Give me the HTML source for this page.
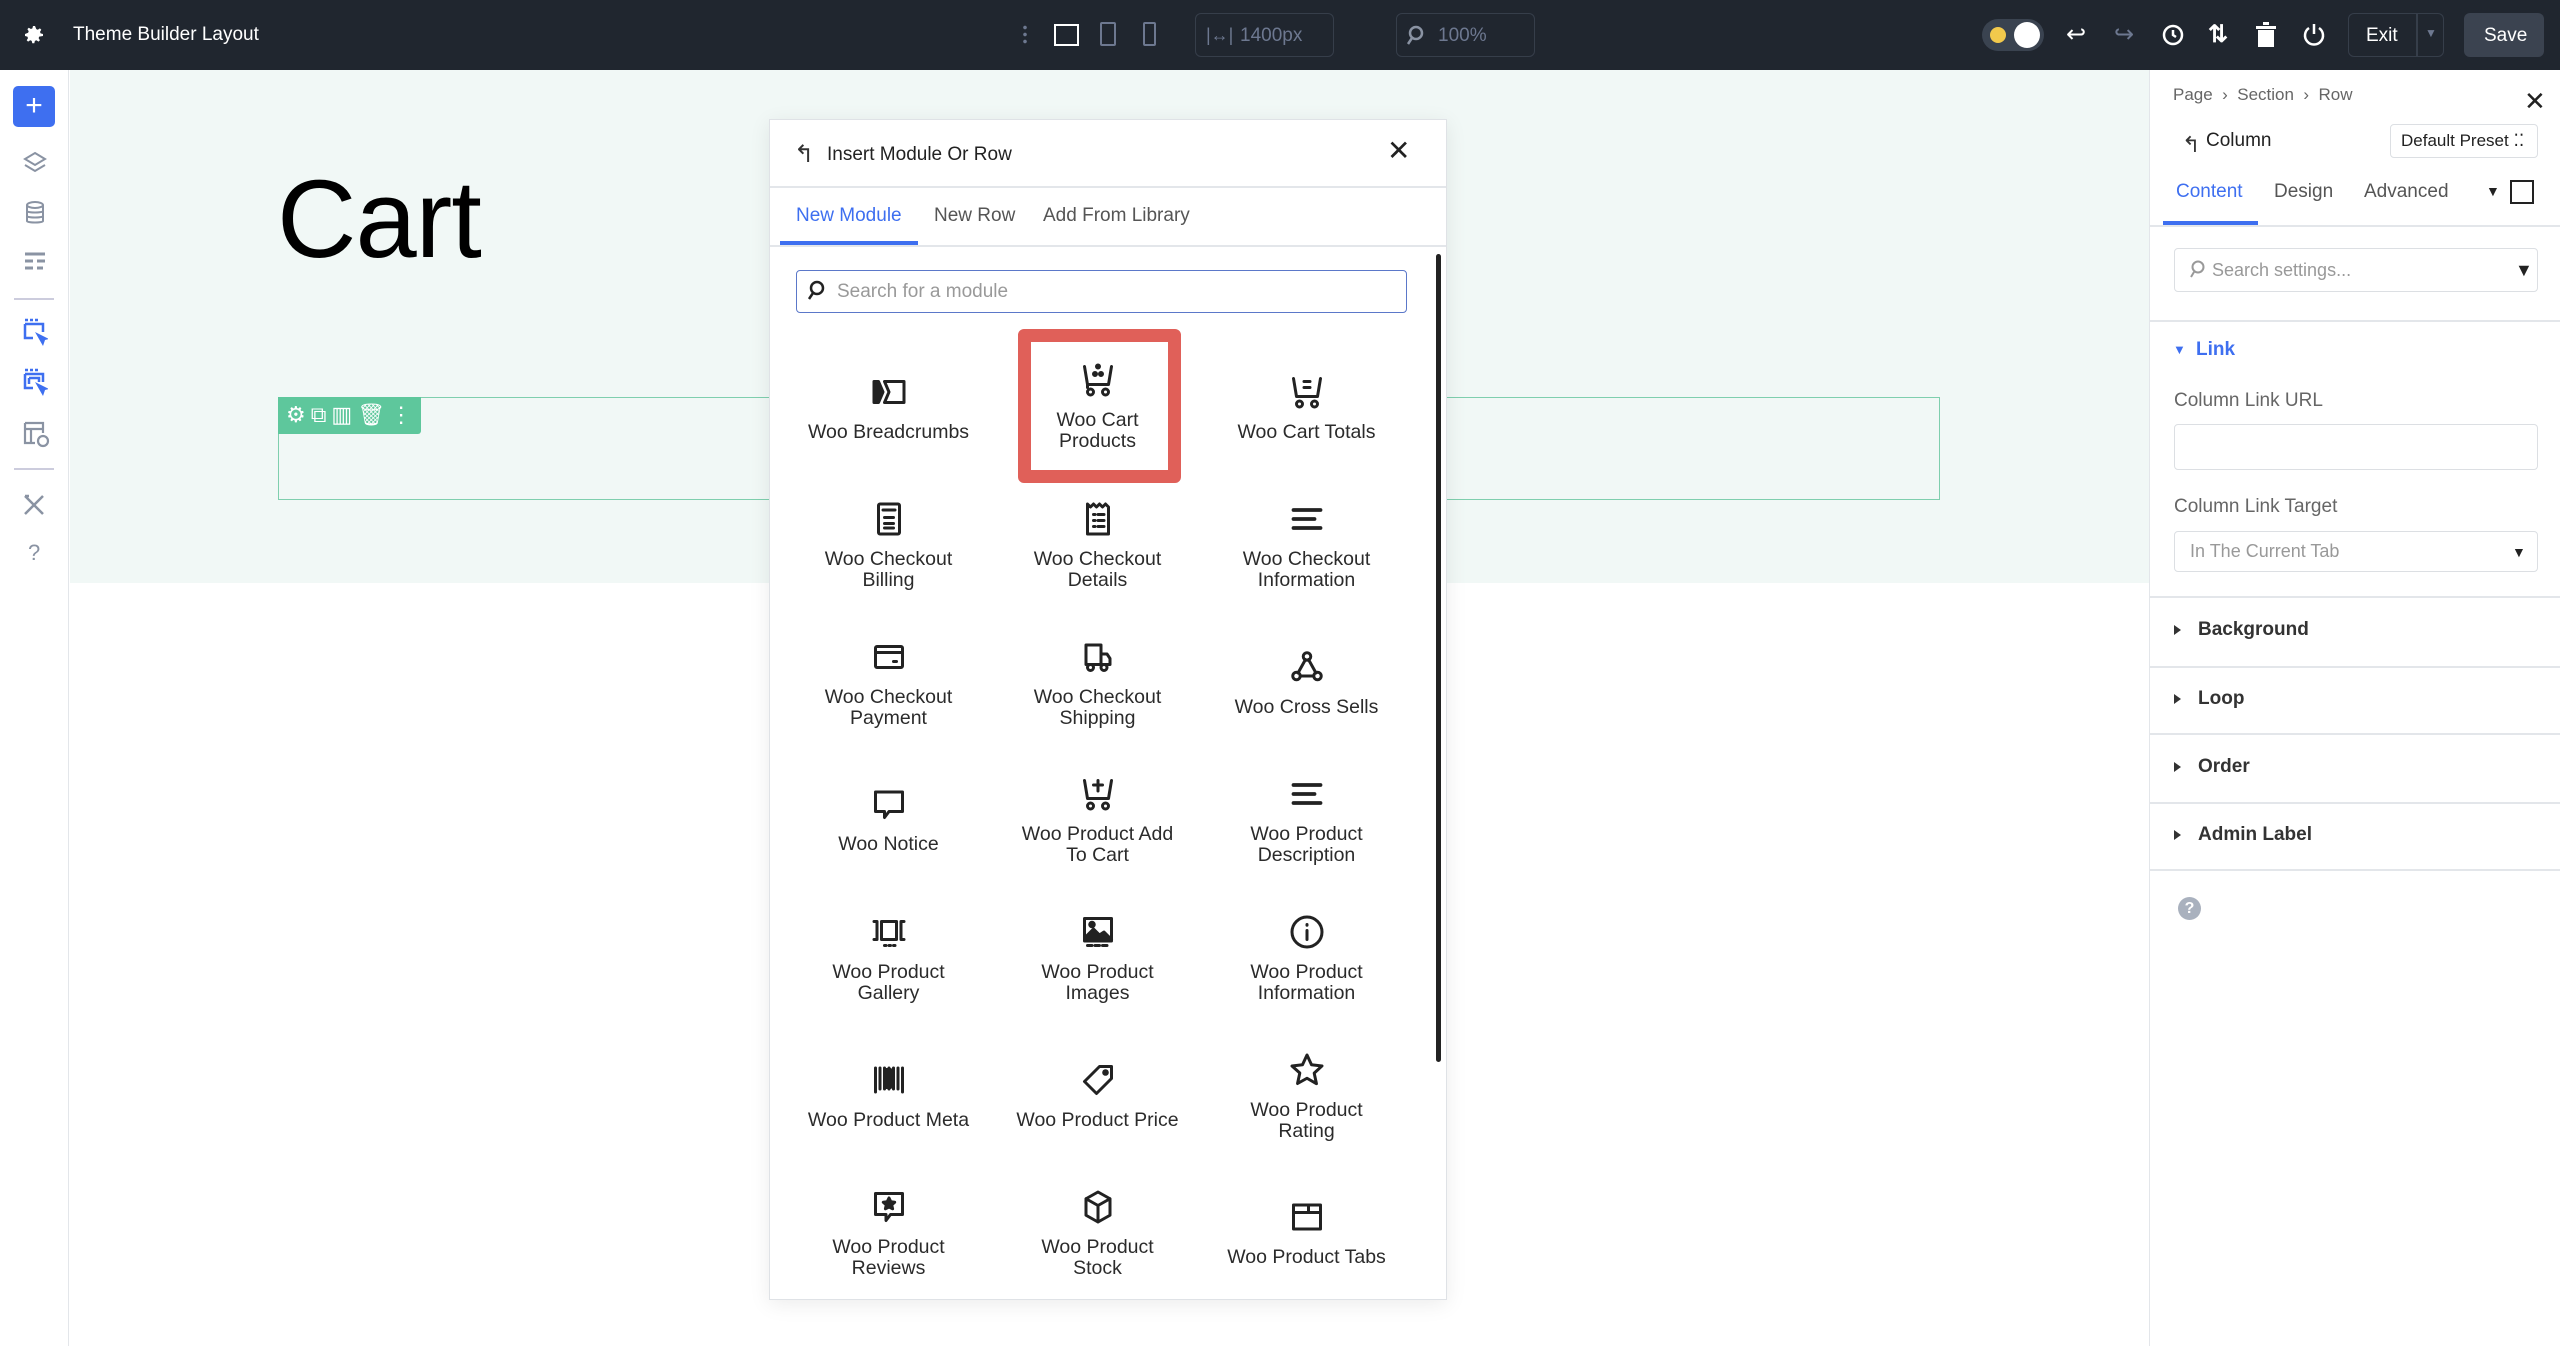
<!DOCTYPE html>
<html><head><meta charset="utf-8"><style>
*{box-sizing:border-box;margin:0;padding:0}
body{width:2560px;height:1346px;overflow:hidden;font-family:"Liberation Sans",sans-serif;background:#fff;position:relative}
.a{position:absolute}
.top{left:0;top:0;width:2560px;height:70px;background:#20262f}
.tb{color:#fff;font-size:20px}
.box{border:1.5px solid #363e4a;border-radius:6px}
.side{left:0;top:70px;width:69px;height:1276px;background:#fff;border-right:1.5px solid #e3e6ea}
.canvas{left:70px;top:70px;width:2079px;height:513px;background:#f1f8f6}
.modal{left:769px;top:119px;width:678px;height:1181px;background:#fff;border:1.5px solid #dfe2e6;box-shadow:0 4px 20px rgba(0,0,0,.08)}
.cell{position:absolute;width:209px;height:137px;display:flex;flex-direction:column;align-items:center;justify-content:center;text-align:center;color:#2b2b2b;font-size:19.5px;line-height:21px}
.cell svg{width:36px;height:36px;margin-bottom:12px;fill:none;stroke:#222;stroke-width:2;stroke-linecap:round;stroke-linejoin:round}
.rp{left:2149px;top:70px;width:411px;height:1276px;background:#fff;border-left:1.5px solid #e3e6ea}
.sep{position:absolute;left:0;width:411px;height:1.5px;background:#e3e6ea}
.sec{position:absolute;left:48px;font-size:19px;font-weight:bold;color:#333}
.tri{position:absolute;left:24px;width:0;height:0;border-top:5px solid transparent;border-bottom:5px solid transparent;border-left:7px solid #333}
.lab{position:absolute;left:24px;font-size:19px;color:#666}
.inp{position:absolute;left:24px;width:364px;border:1.5px solid #dcdfe3;border-radius:4px;background:#fff}
.si svg{position:absolute;fill:none;stroke:#8a93a3;stroke-width:2}
</style></head><body>
<div class="a top"></div>
<svg class="a" style="left:22px;top:23px" width="24" height="24" viewBox="0 0 24 24"><path fill="#fff" d="M12 8a4 4 0 100 8 4 4 0 000-8zm9 5v-2l-2.4-.6-.6-1.5 1.3-2.1-1.4-1.4-2.1 1.3-1.5-.6L13 3h-2l-.6 2.4-1.5.6-2.1-1.3-1.4 1.4 1.3 2.1-.6 1.5L3 11v2l2.4.6.6 1.5-1.3 2.1 1.4 1.4 2.1-1.3 1.5.6.6 2.4h2l.6-2.4 1.5-.6 2.1 1.3 1.4-1.4-1.3-2.1.6-1.5z"/></svg>
<div class="a tb" style="left:73px;top:24px;font-size:19px">Theme Builder Layout</div>
<div class="a" style="left:1023px;top:24px;width:4px;height:20px;background:radial-gradient(circle,#6d7890 1.6px,transparent 2px) 0 0/4px 7px"></div>
<div class="a" style="left:1054px;top:24px;width:25px;height:22px;border:2.5px solid #fff"></div>
<div class="a" style="left:1100px;top:22px;width:16px;height:24px;border:2px solid #6d7890;border-radius:2px"></div>
<div class="a" style="left:1143px;top:22px;width:13px;height:24px;border:2px solid #6d7890;border-radius:2px"></div>
<div class="a box" style="left:1195px;top:13px;width:139px;height:44px"></div>
<div class="a" style="left:1206px;top:25px;color:#6d7890;font-size:18px">|↔|</div>
<div class="a" style="left:1240px;top:25px;color:#6d7890;font-size:19px">1400px</div>
<div class="a box" style="left:1396px;top:13px;width:139px;height:44px"></div>
<svg class="a" style="left:1405px;top:25px" width="20" height="22" viewBox="0 0 20 22"><circle cx="11" cy="8" r="6" fill="none" stroke="#8a93a3" stroke-width="2.5"/><path d="M7 13L3 19" stroke="#8a93a3" stroke-width="2.5"/></svg>
<div class="a" style="left:1438px;top:25px;color:#6d7890;font-size:19px">100%</div>
<div class="a" style="left:1982px;top:19px;width:62px;height:32px;border-radius:16px;background:#3a4350"></div>
<div class="a" style="left:1990px;top:27px;width:16px;height:16px;border-radius:50%;background:#f2c94c"></div>
<div class="a" style="left:2014px;top:22px;width:26px;height:26px;border-radius:50%;background:#fff"></div>
<div class="a tb" style="left:2066px;top:20px;font-size:24px">↩</div>
<div class="a" style="left:2114px;top:20px;font-size:24px;color:#6d7890">↪</div>
<svg class="a" style="left:2161px;top:23px" width="24" height="24" viewBox="0 0 24 24"><circle cx="12" cy="12" r="9" fill="none" stroke="#fff" stroke-width="2.5"/><path d="M12 7v5l3 2" fill="none" stroke="#fff" stroke-width="2.5"/></svg>
<div class="a tb" style="left:2208px;top:20px;font-size:24px;font-weight:bold">⇅</div>
<svg class="a" style="left:2255px;top:22px" width="22" height="26" viewBox="0 0 22 26"><rect x="3" y="8" width="16" height="17" fill="#fff"/><rect x="1" y="4" width="20" height="3" fill="#fff"/><rect x="8" y="0" width="6" height="3" fill="#fff"/></svg>
<svg class="a" style="left:2302px;top:22px" width="24" height="26" viewBox="0 0 24 26"><path d="M7 6a9 9 0 1010 0M12 2v10" fill="none" stroke="#fff" stroke-width="2.5"/></svg>
<div class="a box" style="left:2348px;top:13px;width:96px;height:44px"></div>
<div class="a" style="left:2416px;top:13px;width:1.5px;height:44px;background:#363e4a"></div>
<div class="a tb" style="left:2366px;top:25px;font-size:19px">Exit</div>
<div class="a" style="left:2425px;top:26px;color:#6d7890;font-size:12px">▼</div>
<div class="a" style="left:2464px;top:13px;width:80px;height:44px;background:#3b4350;border-radius:6px"></div>
<div class="a tb" style="left:2484px;top:25px;font-size:19px">Save</div>

<div class="a side"></div>
<div class="a" style="left:13px;top:86px;width:42px;height:41px;background:#3e6ff0;border-radius:5px;color:#fff;font-size:30px;line-height:40px;text-align:center">+</div>
<div class="si">
<svg style="left:22px;top:150px" width="26" height="26" viewBox="0 0 26 26"><path d="M13 3l10 6-10 6-10-6zM3 15l10 6 10-6"/></svg>
<svg style="left:22px;top:200px" width="26" height="26" viewBox="0 0 26 26"><ellipse cx="13" cy="5" rx="8" ry="3"/><path d="M5 5v16c0 2 16 2 16 0V5M5 11c0 2 16 2 16 0M5 16c0 2 16 2 16 0"/></svg>
<svg style="left:22px;top:250px" width="26" height="24" viewBox="0 0 26 24"><path d="M3 4h20M3 11h8M15 11h8M3 18h8M15 18h6" stroke-width="3"/></svg>
</div>
<div class="a" style="left:14px;top:298px;width:40px;height:1.5px;background:#ccd"></div>
<svg class="a" style="left:22px;top:318px" width="26" height="30" viewBox="0 0 26 30"><path d="M3 6h18v8M3 6v14h8" fill="none" stroke="#3e6ff0" stroke-width="2.5"/><path d="M13 14l8 14 2-6 4-1z" fill="#3e6ff0"/><path d="M3 2h3M8 2h3M13 2h3" stroke="#3e6ff0" stroke-width="2.5"/></svg>
<svg class="a" style="left:22px;top:368px" width="26" height="30" viewBox="0 0 26 30"><path d="M3 6h18v8M3 6v14h8M7 10h10v4M7 10v6" fill="none" stroke="#3e6ff0" stroke-width="2.5"/><path d="M13 14l8 14 2-6 4-1z" fill="#3e6ff0"/><path d="M3 2h3M8 2h3M13 2h3" stroke="#3e6ff0" stroke-width="2.5"/></svg>
<svg class="a" style="left:22px;top:420px" width="30" height="30" viewBox="0 0 30 30"><path d="M3 3h18v10M3 3v20h10M3 9h18M9 9v14" fill="none" stroke="#8a93a3" stroke-width="2.2"/><circle cx="21" cy="21" r="5" fill="none" stroke="#8a93a3" stroke-width="2.2"/></svg>
<div class="a" style="left:14px;top:468px;width:40px;height:1.5px;background:#ccd"></div>
<svg class="a" style="left:21px;top:492px" width="26" height="26" viewBox="0 0 26 26"><path d="M4 4l18 18M22 4L4 22M4 4l4 0" fill="none" stroke="#8a93a3" stroke-width="2.5"/></svg>
<div class="a" style="left:28px;top:540px;color:#8a93a3;font-size:22px">?</div>

<div class="a canvas"></div>
<div class="a" style="left:277px;top:156px;font-size:110px;color:#000;letter-spacing:-1px">Cart</div>
<div class="a" style="left:278px;top:397px;width:1662px;height:103px;border:1.5px solid #7fcfae"></div>
<div class="a" style="left:278px;top:397px;width:143px;height:37px;background:#5ec79c;border-radius:0 0 3px 0;color:#fff;font-size:22px;line-height:36px;padding-left:8px;letter-spacing:5px">⚙⧉▥🗑︎⋮</div>

<div class="a modal">
 <div class="a" style="left:24px;top:20px;font-size:24px;color:#333">↰</div>
 <div class="a" style="left:57px;top:24px;font-size:19px;color:#222">Insert Module Or Row</div>
 <div class="a" style="left:617px;top:14px;font-size:28px;color:#222">✕</div>
 <div class="a" style="left:0;top:66px;width:676px;height:1.5px;background:#e3e6ea"></div>
 <div class="a" style="left:26px;top:85px;font-size:19px;color:#3e6ff0">New Module</div>
 <div class="a" style="left:164px;top:85px;font-size:19px;color:#555">New Row</div>
 <div class="a" style="left:273px;top:85px;font-size:19px;color:#555">Add From Library</div>
 <div class="a" style="left:10px;top:121px;width:138px;height:4px;background:#3e6ff0"></div>
 <div class="a" style="left:0;top:125px;width:676px;height:1.5px;background:#e3e6ea"></div>
 <div class="a" style="left:26px;top:150px;width:611px;height:43px;border:1.5px solid #5b78c9;border-radius:4px"></div>
 <svg class="a" style="left:36px;top:160px" width="20" height="22" viewBox="0 0 20 22"><circle cx="11" cy="8" r="6" fill="none" stroke="#222" stroke-width="2.5"/><path d="M7 13L3 19" stroke="#222" stroke-width="2.5"/></svg>
 <div class="a" style="left:67px;top:161px;font-size:19px;color:#999">Search for a module</div>
 <div class="a" style="left:666px;top:134px;width:5px;height:808px;background:#222;border-radius:3px"></div>
 <div class="a" style="left:248px;top:209px;width:163px;height:154px;border:13px solid #e06059;border-radius:6px"></div>
</div>
<div class="a" style="left:784px;top:340px;width:630px;height:960px">
 <div class="cell" style="left:0;top:0"><svg viewBox="0 0 24 24"><path d="M2 5h3l3 7-3 7H2z" fill="#222"/><path d="M9 5h13v14H9l3-7z"/></svg>Woo Breadcrumbs</div>
 <div class="cell" style="left:209px;top:-2px"><svg viewBox="0 0 24 24"><path d="M3 3l2 12h14l2-12M5 15v2"/><circle cx="7" cy="20" r="2"/><circle cx="17" cy="20" r="2"/><circle cx="12" cy="3" r="1" fill="#222"/><circle cx="10" cy="8" r="1" fill="#222"/><circle cx="14" cy="8" r="1" fill="#222"/></svg>Woo Cart<br>Products</div>
 <div class="cell" style="left:418px;top:0"><svg viewBox="0 0 24 24"><path d="M3 3l2 12h14l2-12M10 5h4M10 9h4"/><circle cx="7" cy="20" r="2"/><circle cx="17" cy="20" r="2"/></svg>Woo Cart Totals</div>

 <div class="cell" style="left:0;top:137px"><svg viewBox="0 0 24 24"><rect x="5" y="2" width="14" height="20" rx="1"/><path d="M8 6h8M9 11h6M9 15h6M9 18h6"/></svg>Woo Checkout<br>Billing</div>
 <div class="cell" style="left:209px;top:137px"><svg viewBox="0 0 24 24"><path d="M5 2l2 2 2-2 2 2 2-2 2 2 2-2 2 2v18H5z"/><path d="M9 9h1M12 9h4M9 13h1M12 13h4M9 17h1M12 17h4"/></svg>Woo Checkout<br>Details</div>
 <div class="cell" style="left:418px;top:137px"><svg viewBox="0 0 24 24"><path d="M3 6h18M3 12h14M3 18h18" stroke-width="2.5"/></svg>Woo Checkout<br>Information</div>

 <div class="cell" style="left:0;top:275px"><svg viewBox="0 0 24 24"><rect x="3" y="5" width="18" height="14" rx="1"/><path d="M3 9h18M15 15h2"/></svg>Woo Checkout<br>Payment</div>
 <div class="cell" style="left:209px;top:275px"><svg viewBox="0 0 24 24"><path d="M4 4h10v13H4zM14 10h4l2 3v4h-6"/><circle cx="7" cy="19" r="2"/><circle cx="16" cy="19" r="2"/></svg>Woo Checkout<br>Shipping</div>
 <div class="cell" style="left:418px;top:275px"><svg viewBox="0 0 24 24"><circle cx="12" cy="5" r="2.5"/><circle cx="5" cy="18" r="2.5"/><circle cx="19" cy="18" r="2.5"/><path d="M11 7l-5 9M13 7l5 9M7.5 18h9"/></svg>Woo Cross Sells</div>

 <div class="cell" style="left:0;top:412px"><svg viewBox="0 0 24 24"><path d="M3 4h18v13H12l-3 4v-4H3z"/></svg>Woo Notice</div>
 <div class="cell" style="left:209px;top:412px"><svg viewBox="0 0 24 24"><path d="M3 3l2 12h14l2-12M12 3v7M9 6h6"/><circle cx="7" cy="20" r="2"/><circle cx="17" cy="20" r="2"/></svg>Woo Product Add<br>To Cart</div>
 <div class="cell" style="left:418px;top:412px"><svg viewBox="0 0 24 24"><path d="M3 6h18M3 12h14M3 18h18" stroke-width="2.5"/></svg>Woo Product<br>Description</div>

 <div class="cell" style="left:0;top:550px"><svg viewBox="0 0 24 24"><rect x="7" y="5" width="10" height="12"/><path d="M2 5h2v12H2M22 5h-2v12h2M9 21h1M12 21h1M15 21h1"/></svg>Woo Product<br>Gallery</div>
 <div class="cell" style="left:209px;top:550px"><svg viewBox="0 0 24 24"><rect x="3" y="3" width="18" height="15"/><path d="M3 16l6-6 4 4 3-2 5 5z" fill="#222"/><circle cx="8" cy="7" r="1.5" fill="#222"/><path d="M5 21h3M10 21h3M15 21h3"/></svg>Woo Product<br>Images</div>
 <div class="cell" style="left:418px;top:550px"><svg viewBox="0 0 24 24"><circle cx="12" cy="12" r="10"/><path d="M12 11v6M12 7v.5"/></svg>Woo Product<br>Information</div>

 <div class="cell" style="left:0;top:688px"><svg viewBox="0 0 24 24"><path d="M3 4v16M6 4v14M9 4v14M12 4v14M15 4v14M18 4v14M21 4v16"/><path d="M10 5h3v12h-3z" fill="#222"/></svg>Woo Product Meta</div>
 <div class="cell" style="left:209px;top:688px"><svg viewBox="0 0 24 24"><path d="M13 3h8v8L11 21 3 13z"/><circle cx="17" cy="7" r="1.2" fill="#222"/></svg>Woo Product Price</div>
 <div class="cell" style="left:418px;top:688px"><svg viewBox="0 0 24 24"><path d="M12 2l3 6.5 7 .8-5.2 4.8 1.5 7L12 17.5 5.7 21l1.5-7L2 9.3l7-.8z"/></svg>Woo Product<br>Rating</div>

 <div class="cell" style="left:0;top:825px"><svg viewBox="0 0 24 24"><path d="M3 3h18v14H13l-3 4v-4H3z"/><path d="M12 6l1.2 2.5 2.6.3-2 1.8.6 2.6L12 12l-2.4 1.2.6-2.6-2-1.8 2.6-.3z" fill="#222"/></svg>Woo Product<br>Reviews</div>
 <div class="cell" style="left:209px;top:825px"><svg viewBox="0 0 24 24"><path d="M12 2l8 4.5v11L12 22l-8-4.5v-11zM4 6.5l8 4.5 8-4.5M12 11v11"/></svg>Woo Product<br>Stock</div>
 <div class="cell" style="left:418px;top:825px"><svg viewBox="0 0 24 24"><rect x="3" y="4" width="18" height="16"/><path d="M3 9h18M13 4v5"/></svg>Woo Product Tabs</div>
</div>

<div class="a rp">
 <div class="a" style="left:23px;top:15px;font-size:17px;color:#666">Page &nbsp;›&nbsp; Section &nbsp;›&nbsp; Row</div>
 <div class="a" style="left:374px;top:16px;font-size:26px;color:#222">✕</div>
 <div class="a" style="left:32px;top:62px;font-size:22px;color:#333">↰</div>
 <div class="a" style="left:56px;top:60px;font-size:19px;color:#222">Column</div>
 <div class="a" style="left:240px;top:54px;width:148px;height:34px;border:1.5px solid #dcdfe3;border-radius:4px;font-size:17px;line-height:32px;padding-left:10px;color:#222">Default Preset ⁚⁚</div>
 <div class="a" style="left:26px;top:111px;font-size:19px;color:#3e6ff0">Content</div>
 <div class="a" style="left:124px;top:111px;font-size:19px;color:#555">Design</div>
 <div class="a" style="left:214px;top:111px;font-size:19px;color:#555">Advanced</div>
 <div class="a" style="left:336px;top:113px;font-size:14px;color:#222">▼</div>
 <div class="a" style="left:360px;top:110px;width:24px;height:24px;border:2.5px solid #222"></div>
 <div class="a" style="left:13px;top:151px;width:95px;height:4px;background:#3e6ff0"></div>
 <div class="sep" style="top:155px"></div>
 <div class="inp" style="top:178px;height:44px"></div>
 <svg class="a" style="left:38px;top:190px" width="18" height="20" viewBox="0 0 18 20"><circle cx="10" cy="7" r="5.5" fill="none" stroke="#999" stroke-width="2"/><path d="M6 12l-3 5" stroke="#999" stroke-width="2"/></svg>
 <div class="a" style="left:62px;top:190px;font-size:18px;color:#999">Search settings...</div>
 <div class="a" style="left:365px;top:190px;font-size:18px;color:#222">▼</div>
 <div class="sep" style="top:250px"></div>
 <div class="a" style="left:23px;top:272px;font-size:13px;color:#3e6ff0">▼</div>
 <div class="a" style="left:46px;top:269px;font-size:19px;font-weight:bold;color:#3e6ff0">Link</div>
 <div class="lab" style="top:320px">Column Link URL</div>
 <div class="inp" style="top:354px;height:46px"></div>
 <div class="lab" style="top:426px">Column Link Target</div>
 <div class="inp" style="top:461px;height:41px"></div>
 <div class="a" style="left:40px;top:471px;font-size:18px;color:#999">In The Current Tab</div>
 <div class="a" style="left:362px;top:474px;font-size:14px;color:#222">▼</div>
 <div class="sep" style="top:526px"></div>
 <div class="tri" style="top:555px"></div><div class="sec" style="top:549px">Background</div>
 <div class="sep" style="top:596px"></div>
 <div class="tri" style="top:624px"></div><div class="sec" style="top:618px">Loop</div>
 <div class="sep" style="top:663px"></div>
 <div class="tri" style="top:692px"></div><div class="sec" style="top:686px">Order</div>
 <div class="sep" style="top:732px"></div>
 <div class="tri" style="top:760px"></div><div class="sec" style="top:754px">Admin Label</div>
 <div class="sep" style="top:799px"></div>
 <div class="a" style="left:28px;top:827px;width:23px;height:23px;border-radius:50%;background:#a9b1be;color:#fff;font-size:16px;font-weight:bold;text-align:center;line-height:23px">?</div>
</div>
</body></html>
